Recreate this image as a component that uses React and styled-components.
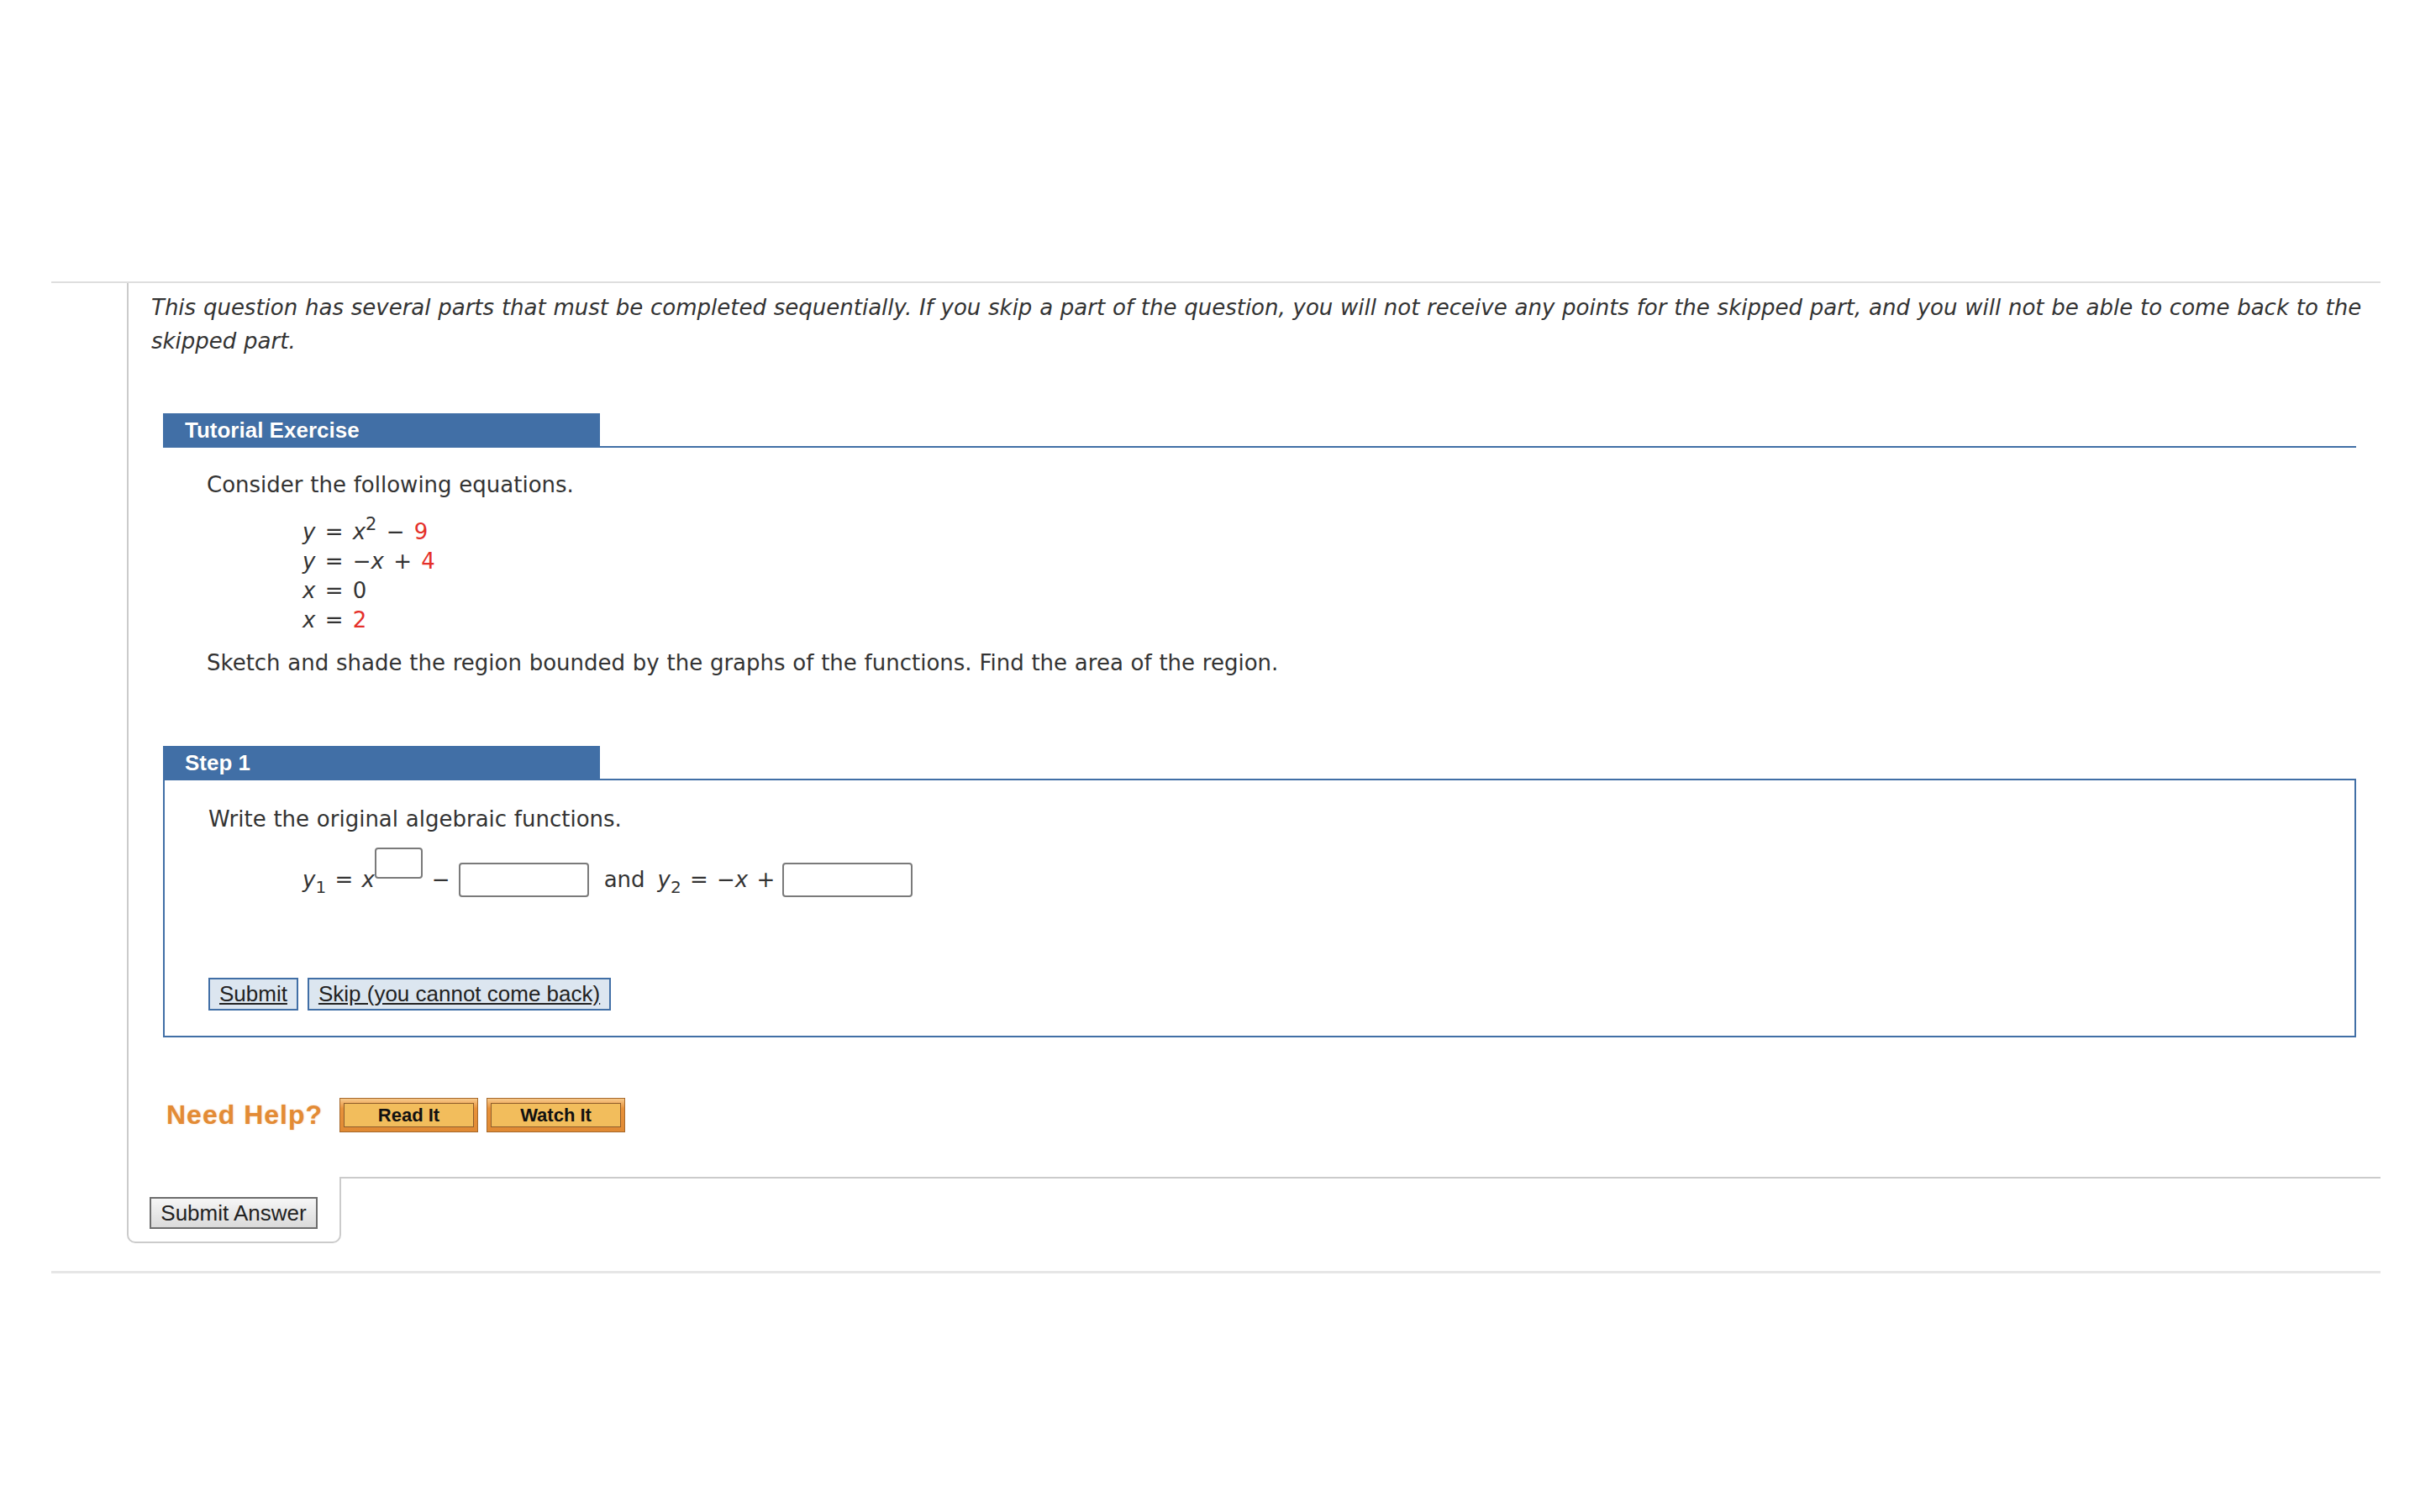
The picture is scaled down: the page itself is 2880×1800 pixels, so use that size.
import React from 'react'
import styled, { createGlobalStyle } from 'styled-components'

const blue = '#416fa6'
const red = '#e5302a'

const GlobalStyle = createGlobalStyle`
    body {
        margin: 0;
        background: #fff;
        color: #333;
        font-family: "DejaVu Sans", Verdana, sans-serif;
    }
`

const Page = styled.div`
    padding: 335px 0 0 61px;
`

const Question = styled.div`
    width: 2772px;
    border-top: 2px solid #dedede;
    border-bottom: 3px solid #e6e6e6;
    padding: 0 0 33px 90px;
    box-sizing: border-box;
`

const Panel = styled.div`
    border-left: 2px solid #cbcbcb;
    padding: 9px 0 53px 27px;
`

const Intro = styled.p`
    margin: 0;
    font-size: 26px;
    line-height: 40px;
    font-style: italic;
    word-spacing: 0.5px;
`

const Section = styled.div`
    margin: ${p => p.$top}px 29px 0 14px;
`

const Header = styled.div`
    display: flex;
    border-bottom: 2px solid ${blue};
`

const Tab = styled.div`
    width: 494px;
    height: 39px;
    padding-left: 26px;
    background: ${blue};
    color: #fff;
    font: bold 26px/40px "Liberation Sans", Arial, sans-serif;
    text-shadow: 0 0 1px rgba(0, 0, 0, 0.25);
`

const TutorialBody = styled.div`
    padding: 26px 0 0 52px;
`

const Prose = styled.p`
    margin: 0;
    font-size: 26px;
    line-height: 36px;
    word-spacing: 0.5px;
`

const Equations = styled.div`
    margin: 21px 0 15px 114px;
    font-size: 26px;
    line-height: 35px;
    word-spacing: 3px;
`

const I = styled.i`
    font-style: italic;
`

const Red = styled.span`
    color: ${red};
`

const Sup = styled.sup`
    font-size: 21px;
    line-height: 0;
    vertical-align: 11px;
`

const Sub = styled.sub`
    font-size: 20px;
    line-height: 0;
    vertical-align: -7px;
`

const StepBox = styled.div`
    border: 2px solid ${blue};
    border-top: none;
    padding: 28px 50px 30px 52px;
`

const MathRow = styled.div`
    display: flex;
    align-items: center;
    height: 41px;
    margin-top: 34px;
    padding-left: 112px;
    font-size: 26px;
    line-height: 41px;
    white-space: nowrap;
    word-spacing: 2px;
`

const Term = styled.span`
    margin-left: ${p => p.$ml || 0}px;
    margin-right: ${p => p.$mr || 0}px;
`

const Field = styled.input`
    width: 155px;
    height: 41px;
    box-sizing: border-box;
    margin-left: ${p => p.$ml || 0}px;
    border: 2px solid #7a7a7a;
    border-radius: 4px;
    background: #fff;
    font-size: 24px;
    padding: 0 6px;
`

const PowerField = styled(Field)`
    width: 57px;
    height: 37px;
    align-self: flex-start;
    margin-top: -18px;
`

const Actions = styled.div`
    display: flex;
    gap: 11px;
    margin-top: 96px;
`

const StepButton = styled.button`
    height: 39px;
    padding: 0 11px;
    border: 2px solid ${blue};
    background: #dce6f0;
    color: #222;
    font: 26px/35px "Liberation Sans", Arial, sans-serif;
    text-decoration: underline;
    cursor: pointer;
`

const HelpRow = styled.div`
    display: flex;
    align-items: center;
    height: 41px;
    margin-top: 72px;
    padding-left: 18px;
`

const HelpLabel = styled.span`
    margin-right: 20px;
    color: #e38b35;
    font: bold 32px "Liberation Sans", Arial, sans-serif;
    letter-spacing: 1px;
    text-shadow: 0 0 2px rgba(227, 139, 53, 0.45);
`

const HelpButton = styled.button`
    width: 165px;
    height: 41px;
    margin-right: 10px;
    padding: 5px 4px;
    border: 1px solid #a5682b;
    background: linear-gradient(#f7c98a, #e8923a 30%, #e08a34);
    cursor: pointer;
`

const HelpInner = styled.span`
    display: block;
    height: 100%;
    box-sizing: border-box;
    border: 1px solid #8e5d2c;
    background: #f2bd5c;
    color: #111;
    font: bold 22px/27px "Liberation Sans", Arial, sans-serif;
`

const Footer = styled.div`
    display: flex;
    align-items: flex-start;
`

const SubmitTab = styled.div`
    padding: 24px 26px 15px 25px;
    border: 2px solid #cbcbcb;
    border-top: none;
    border-radius: 0 0 10px 10px;
`

const FooterRule = styled.div`
    flex: 1;
    border-top: 2px solid #cbcbcb;
`

const SubmitAnswer = styled.button`
    width: 200px;
    height: 38px;
    padding: 0;
    border: 2px solid #6d6d6d;
    background: linear-gradient(#f6f6f6, #dadada);
    color: #222;
    font: 26px/34px "Liberation Sans", Arial, sans-serif;
    cursor: pointer;
`

function SectionHeader({ children }) {
    return (
        <Header>
            <Tab>{children}</Tab>
        </Header>
    )
}

export default function App() {
    return (
        <Page>
            <GlobalStyle />
            <Question>
                <Panel>
                    <Intro>
                        This question has several parts that must be completed sequentially. If you skip a part of the question, you will not receive any points for the skipped part, and you will not be able to come back to the skipped part.
                    </Intro>

                    <Section $top={66}>
                        <SectionHeader>Tutorial Exercise</SectionHeader>
                        <TutorialBody>
                            <Prose>Consider the following equations.</Prose>
                            <Equations>
                                <div><I>y</I> = <I>x</I><Sup>2</Sup> − <Red>9</Red></div>
                                <div><I>y</I> = −<I>x</I> + <Red>4</Red></div>
                                <div><I>x</I> = 0</div>
                                <div><I>x</I> = <Red>2</Red></div>
                            </Equations>
                            <Prose>Sketch and shade the region bounded by the graphs of the functions. Find the area of the region.</Prose>
                        </TutorialBody>
                    </Section>

                    <Section $top={81}>
                        <SectionHeader>Step 1</SectionHeader>
                        <StepBox>
                            <Prose>Write the original algebraic functions.</Prose>
                            <MathRow>
                                <Term><I>y</I><Sub>1</Sub>&nbsp;=&nbsp;<I>x</I></Term>
                                <PowerField type="text" aria-label="exponent" />
                                <Term $ml={11} $mr={10}>−</Term>
                                <Field type="text" aria-label="constant" />
                                <Term $ml={18}>and</Term>
                                <Term $ml={15}><I>y</I><Sub>2</Sub>&nbsp;=&nbsp;−<I>x</I>&nbsp;+</Term>
                                <Field $ml={9} type="text" aria-label="y2 constant" />
                            </MathRow>
                            <Actions>
                                <StepButton>Submit</StepButton>
                                <StepButton>Skip (you cannot come back)</StepButton>
                            </Actions>
                        </StepBox>
                    </Section>

                    <HelpRow>
                        <HelpLabel>Need Help?</HelpLabel>
                        <HelpButton><HelpInner>Read It</HelpInner></HelpButton>
                        <HelpButton><HelpInner>Watch It</HelpInner></HelpButton>
                    </HelpRow>
                </Panel>

                <Footer>
                    <SubmitTab>
                        <SubmitAnswer>Submit Answer</SubmitAnswer>
                    </SubmitTab>
                    <FooterRule />
                </Footer>
            </Question>
        </Page>
    )
}
